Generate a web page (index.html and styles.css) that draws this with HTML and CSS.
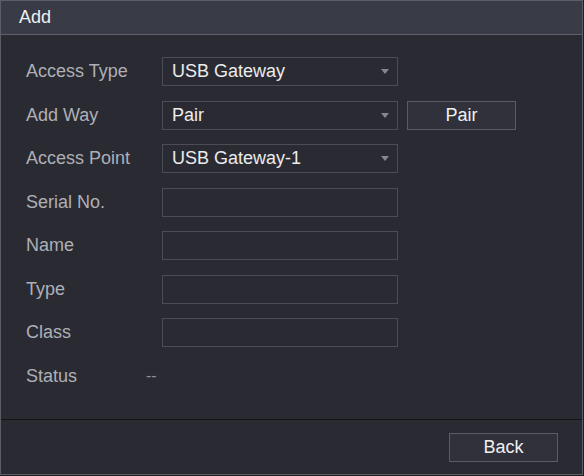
FILE: index.html
```html
<!DOCTYPE html>
<html>
<head>
<meta charset="utf-8">
<link rel="stylesheet" href="styles.css">
</head>
<body>
<div class="dialog">
  <div class="header">Add</div>
  <div class="form">
    <div class="row">
      <div class="label">Access Type</div>
      <div class="field select"><span>USB Gateway</span><i class="arrow"></i></div>
    </div>
    <div class="row">
      <div class="label">Add Way</div>
      <div class="field select"><span>Pair</span><i class="arrow"></i></div>
      <div class="btn pair">Pair</div>
    </div>
    <div class="row">
      <div class="label">Access Point</div>
      <div class="field select"><span>USB Gateway-1</span><i class="arrow"></i></div>
    </div>
    <div class="row">
      <div class="label">Serial No.</div>
      <div class="field"></div>
    </div>
    <div class="row">
      <div class="label">Name</div>
      <div class="field"></div>
    </div>
    <div class="row">
      <div class="label">Type</div>
      <div class="field"></div>
    </div>
    <div class="row">
      <div class="label">Class</div>
      <div class="field"></div>
    </div>
    <div class="row">
      <div class="label short">Status</div>
      <div class="value">--</div>
    </div>
  </div>
  <div class="footer">
    <div class="btn back">Back</div>
  </div>
</div>
</body>
</html>
```

FILE: styles.css
```css
html, body {
  margin: 0;
  padding: 0;
  background: #1e1f25;
}
body {
  width: 584px;
  height: 476px;
  font-family: "Liberation Sans", Arial, sans-serif;
}
.dialog {
  box-sizing: border-box;
  width: 583px;
  height: 475px;
  border: 1px solid #5c5e67;
  background: #2a2a33;
  display: flex;
  flex-direction: column;
}
.header {
  box-sizing: border-box;
  height: 34px;
  background: #393b46;
  border-bottom: 1px solid #5f616a;
  color: #f0f0f0;
  font-size: 18px;
  line-height: 33px;
  padding-left: 18px;
}
.form {
  flex: 1;
  padding: 22px 0 0 25px;
  display: flex;
  flex-direction: column;
  gap: 14.5px;
}
.row {
  display: flex;
  align-items: center;
  height: 29px;
}
.label {
  width: 136px;
  color: #aeb0b6;
  font-size: 18px;
}
.label.short {
  width: 120px;
}
.field {
  box-sizing: border-box;
  width: 236px;
  height: 29px;
  border: 1px solid #4b4c55;
  background: #2a2a33;
  display: flex;
  align-items: center;
  padding-left: 9px;
  padding-right: 8px;
  color: #ececec;
  font-size: 18px;
}
.field span {
  flex: 1;
}
.arrow {
  width: 0;
  height: 0;
  border-left: 4px solid transparent;
  border-right: 4px solid transparent;
  border-top: 5px solid #85868e;
}
.value {
  color: #8f9097;
  font-size: 16px;
}
.btn {
  box-sizing: border-box;
  height: 29px;
  border: 1px solid #5a5c65;
  background: #30313b;
  color: #f0f0f0;
  font-size: 18px;
  display: flex;
  align-items: center;
  justify-content: center;
}
.pair {
  width: 109px;
  margin-left: 9px;
}
.footer {
  box-sizing: border-box;
  height: 55px;
  border-top: 1px solid #131418;
  display: flex;
  justify-content: flex-end;
  align-items: flex-start;
  padding: 13px 24px 0 0;
}
.back {
  width: 109px;
}
```
